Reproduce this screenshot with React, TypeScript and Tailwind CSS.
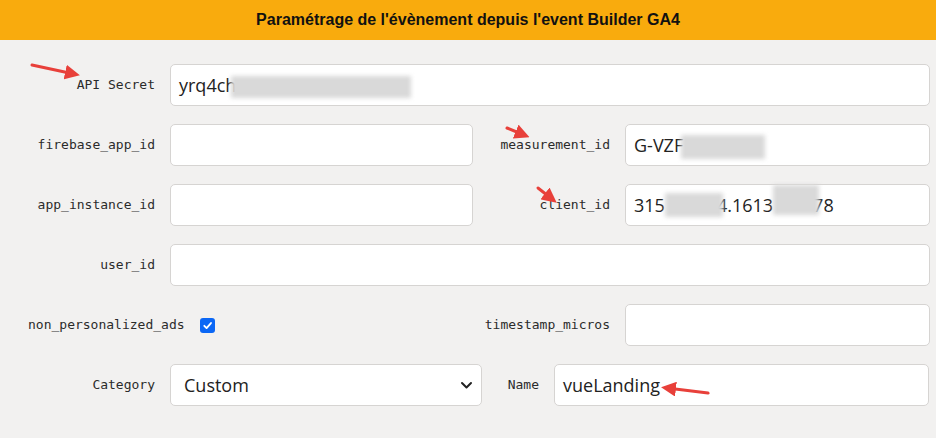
import React from 'react'

const labelCls =
  "text-[13px] text-[#2b2b2b] font-['DejaVu_Sans_Mono',monospace] whitespace-nowrap"
const inputCls =
  "h-[42px] rounded-[5px] border border-[#d6d4d2] bg-white px-2 text-[18px] text-[#222] font-['Open_Sans',sans-serif] outline-none"

function Blur({ className }: { className: string }) {
  return <span className={`absolute bg-[#d9d9d9] blur-[2px] ${className}`} />
}

function Arrows() {
  const arrows = [
    { x1: 32, y1: 65, x2: 74, y2: 74 },
    { x1: 507, y1: 128, x2: 524, y2: 135 },
    { x1: 538, y1: 188, x2: 552, y2: 199 },
    { x1: 708, y1: 393, x2: 667, y2: 388 },
  ]
  return (
    <svg className="pointer-events-none absolute inset-0" width="936" height="438">
      <defs>
        <marker id="head" markerWidth="5" markerHeight="5" refX="3" refY="2.5" orient="auto">
          <path d="M0,0 L5,2.5 L0,5 Z" fill="#e8403a" />
        </marker>
      </defs>
      {arrows.map((a, i) => (
        <line
          key={i}
          x1={a.x1}
          y1={a.y1}
          x2={a.x2}
          y2={a.y2}
          stroke="#e8403a"
          strokeWidth="3"
          strokeLinecap="round"
          markerEnd="url(#head)"
        />
      ))}
    </svg>
  )
}

export default function App() {
  return (
    <div className="relative h-[438px] w-[936px] overflow-hidden bg-[#f2f1f0]">
      <div className="flex h-[40px] items-center justify-center bg-[#f9ab0d] text-[16px] font-bold text-[#111] font-['Liberation_Sans',Arial,sans-serif]">
        Paramétrage de l'évènement depuis l'event Builder GA4
      </div>

      <div className="flex flex-col gap-[18px] pt-[24px] pr-[6px]">
        {/* API Secret */}
        <div className="flex items-center gap-[15px]">
          <label className={`${labelCls} w-[155px] text-right`}>API Secret</label>
          <div className={`${inputCls} relative flex flex-1 items-center`}>
            yrq4ch
            <Blur className="left-[60px] top-[11px] h-[22px] w-[180px]" />
          </div>
        </div>

        {/* firebase / measurement */}
        <div className="flex items-center gap-[15px]">
          <label className={`${labelCls} w-[155px] text-right`}>firebase_app_id</label>
          <div className={`${inputCls} w-[303px] bg-[#f7f6f5]`} />
          <label className={`${labelCls} w-[122px] text-right`}>measurement_id</label>
          <div className={`${inputCls} relative flex flex-1 items-center`}>
            G-VZF
            <Blur className="left-[55px] top-[10px] h-[24px] w-[84px]" />
          </div>
        </div>

        {/* app_instance / client */}
        <div className="flex items-center gap-[15px]">
          <label className={`${labelCls} w-[155px] text-right`}>app_instance_id</label>
          <div className={`${inputCls} w-[303px] bg-[#f7f6f5]`} />
          <label className={`${labelCls} w-[122px] text-right`}>client_id</label>
          <div className={`${inputCls} relative flex flex-1 items-center`}>
            <span>315</span>
            <span className="relative z-10 h-[24px] w-[58px] bg-[#d9d9d9] blur-[2px]" />
            <span className="-ml-[6px]">4.1613</span>
            <span className="relative z-10 -mt-[10px] h-[30px] w-[46px] bg-[#d9d9d9] blur-[2px]" />
            <span className="-ml-[6px]">78</span>
          </div>
        </div>

        {/* user_id */}
        <div className="flex items-center gap-[15px]">
          <label className={`${labelCls} w-[155px] text-right`}>user_id</label>
          <div className={`${inputCls} flex-1`} />
        </div>

        {/* non_personalized_ads / timestamp */}
        <div className="flex items-center">
          <label className={`${labelCls} ml-[28px]`}>non_personalized_ads</label>
          <span className="ml-[15px] flex h-[15px] w-[15px] items-center justify-center rounded-[3px] bg-[#0b67f5]">
            <svg width="11" height="11" viewBox="0 0 12 12">
              <path d="M2.5 6.3 L5 8.8 L9.8 3.3" fill="none" stroke="white" strokeWidth="2" strokeLinecap="round" strokeLinejoin="round" />
            </svg>
          </span>
          <label className={`${labelCls} ml-auto`}>timestamp_micros</label>
          <div className={`${inputCls} ml-[15px] w-[305px]`} />
        </div>

        {/* Category / Name */}
        <div className="flex items-center gap-[15px]">
          <label className={`${labelCls} w-[155px] text-right`}>Category</label>
          <div className={`${inputCls} relative flex w-[312px] items-center pl-[13px]`}>
            Custom
            <svg className="absolute right-[8px] top-[15px]" width="13" height="11" viewBox="0 0 13 11">
              <path d="M2 3 L6.5 7.5 L11 3" fill="none" stroke="#222" strokeWidth="2" strokeLinecap="round" strokeLinejoin="round" />
            </svg>
          </div>
          <label className={`${labelCls} w-[42px] text-right`}>Name</label>
          <div className={`${inputCls} mr-[1px] flex flex-1 items-center`}>vueLanding</div>
        </div>
      </div>

      <Arrows />
    </div>
  )
}
